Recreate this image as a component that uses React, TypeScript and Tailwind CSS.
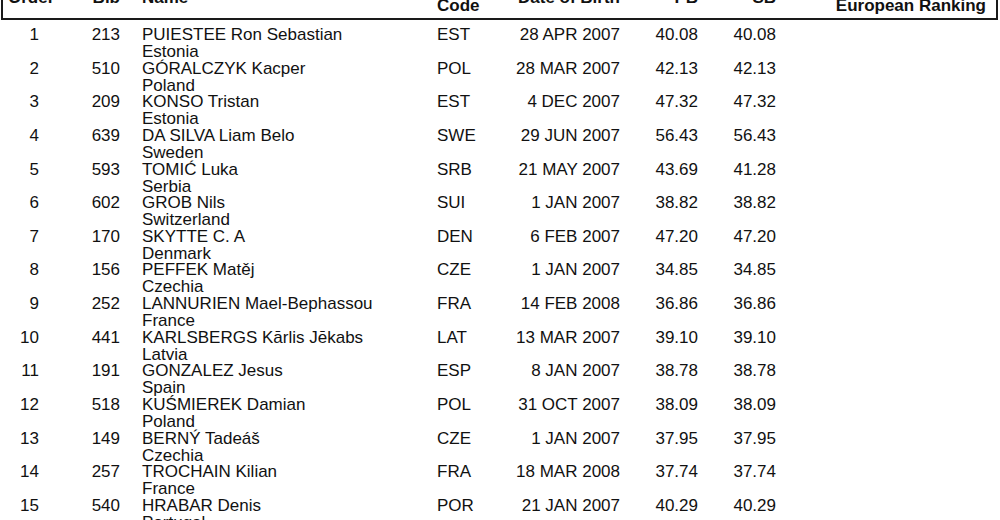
import React from "react";

type Row = {
  order: number;
  bib: string;
  name: string;
  country: string;
  code: string;
  dob: string;
  pb: string;
  sb: string;
};

const rows: Row[] = [
  { order: 1, bib: "213", name: "PUIESTEE Ron Sebastian", country: "Estonia", code: "EST", dob: "28 APR 2007", pb: "40.08", sb: "40.08" },
  { order: 2, bib: "510", name: "GÓRALCZYK Kacper", country: "Poland", code: "POL", dob: "28 MAR 2007", pb: "42.13", sb: "42.13" },
  { order: 3, bib: "209", name: "KONSO Tristan", country: "Estonia", code: "EST", dob: "4 DEC 2007", pb: "47.32", sb: "47.32" },
  { order: 4, bib: "639", name: "DA SILVA Liam Belo", country: "Sweden", code: "SWE", dob: "29 JUN 2007", pb: "56.43", sb: "56.43" },
  { order: 5, bib: "593", name: "TOMIĆ Luka", country: "Serbia", code: "SRB", dob: "21 MAY 2007", pb: "43.69", sb: "41.28" },
  { order: 6, bib: "602", name: "GROB Nils", country: "Switzerland", code: "SUI", dob: "1 JAN 2007", pb: "38.82", sb: "38.82" },
  { order: 7, bib: "170", name: "SKYTTE C. A", country: "Denmark", code: "DEN", dob: "6 FEB 2007", pb: "47.20", sb: "47.20" },
  { order: 8, bib: "156", name: "PEFFEK Matěj", country: "Czechia", code: "CZE", dob: "1 JAN 2007", pb: "34.85", sb: "34.85" },
  { order: 9, bib: "252", name: "LANNURIEN Mael-Bephassou", country: "France", code: "FRA", dob: "14 FEB 2008", pb: "36.86", sb: "36.86" },
  { order: 10, bib: "441", name: "KARLSBERGS Kārlis Jēkabs", country: "Latvia", code: "LAT", dob: "13 MAR 2007", pb: "39.10", sb: "39.10" },
  { order: 11, bib: "191", name: "GONZALEZ Jesus", country: "Spain", code: "ESP", dob: "8 JAN 2007", pb: "38.78", sb: "38.78" },
  { order: 12, bib: "518", name: "KUŚMIEREK Damian", country: "Poland", code: "POL", dob: "31 OCT 2007", pb: "38.09", sb: "38.09" },
  { order: 13, bib: "149", name: "BERNÝ Tadeáš", country: "Czechia", code: "CZE", dob: "1 JAN 2007", pb: "37.95", sb: "37.95" },
  { order: 14, bib: "257", name: "TROCHAIN Kilian", country: "France", code: "FRA", dob: "18 MAR 2008", pb: "37.74", sb: "37.74" },
  { order: 15, bib: "540", name: "HRABAR Denis", country: "Portugal", code: "POR", dob: "21 JAN 2007", pb: "40.29", sb: "40.29" },
];

const cols = "grid grid-cols-[36px_81px_317px_60px_123px_78px_78px_1fr]";

export default function App() {
  return (
    <div
      className="w-[1000px] h-[520px] overflow-hidden bg-white text-[#111] text-[17px] leading-[17px]"
      style={{ fontFamily: '"Liberation Sans", Arial, Helvetica, sans-serif' }}
    >
      <div className="ml-[1px] w-[997px] -mt-[26px]">
        {/* Header */}
        <div className={`${cols} border-2 border-[#1a1a1a] pt-[4px] pb-[4px] font-bold whitespace-nowrap`}>
          <div className="self-center pl-[5px]">Order</div>
          <div className="self-center text-right">Bib</div>
          <div className="self-center pl-[22px]">Name</div>
          <div>
            <div>Country</div>
            <div>Code</div>
          </div>
          <div className="self-center text-right">Date of Birth</div>
          <div className="self-center text-right">PB</div>
          <div className="self-center text-right">SB</div>
          <div className="text-right pr-[10px]">
            <div>Current</div>
            <div>European Ranking</div>
          </div>
        </div>

        {/* Rows */}
        <div className="mt-[6px] border-x-2 border-transparent whitespace-nowrap">
          {rows.map((r) => (
            <div key={r.order} className={`${cols} h-[33.64px]`}>
              <div className="text-right">{r.order}</div>
              <div className="text-right">{r.bib}</div>
              <div className="pl-[22px]">
                <div>{r.name}</div>
                <div>{r.country}</div>
              </div>
              <div>{r.code}</div>
              <div className="text-right">{r.dob}</div>
              <div className="text-right">{r.pb}</div>
              <div className="text-right">{r.sb}</div>
              <div />
            </div>
          ))}
        </div>
      </div>
    </div>
  );
}
